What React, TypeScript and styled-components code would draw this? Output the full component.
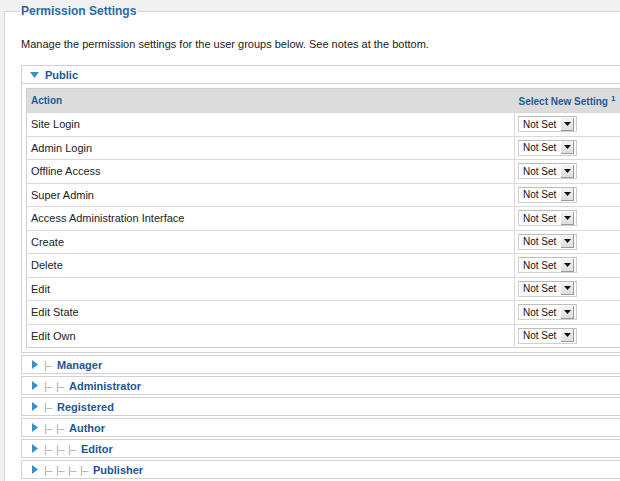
import styled, { createGlobalStyle } from "styled-components";

const GlobalStyle = createGlobalStyle`
  html, body {
    margin: 0;
    padding: 0;
    overflow: hidden;
  }
  body {
    background: #f1f1f1;
    font-family: "Liberation Sans", Arial, sans-serif;
    font-size: 11px;
    color: #222;
  }
`;

const Fieldset = styled.fieldset`
  margin: 4px 0 0 4px;
  padding: 0 0 20px 16px;
  width: 700px;
  border: 1px solid #d6d6d6;
  border-right: none;
  background: #fff;
`;

const Legend = styled.legend`
  padding: 0 1px;
  margin-left: -1px;
  font-size: 12px;
  font-weight: bold;
  line-height: 14px;
  color: #2c6aa3;
`;

const Intro = styled.p`
  margin: 19px 0 14px;
  line-height: 14px;
`;

const Panel = styled.div`
  border: 1px solid #d2d2d2;
  background: #fff;
  margin-bottom: 2px;
`;

const PanelHeader = styled.div<{ $open?: boolean }>`
  height: 17px;
  display: flex;
  align-items: center;
  padding-left: ${(p) => (p.$open ? 8 : 10)}px;
  font-weight: bold;
  font-size: 11px;
  color: #1f5690;
`;

const Arrow = styled.svg`
  flex: none;
  margin-right: 6px;
`;

const TreeStep = styled.span`
  display: inline-block;
  width: 12px;
  color: #a9a9a9;
  font-weight: normal;
  letter-spacing: -0.5px;

  &:last-of-type {
    width: 13px;
  }
`;

const PanelBody = styled.div`
  border-top: 1px solid #d2d2d2;
  padding: 4px;
`;

const Table = styled.table`
  border-collapse: collapse;
  table-layout: fixed;
  width: 100%;
  border: 1px solid #cfcfcf;
`;

const ActionCol = styled.col`
  width: 488px;
`;

const HeadCell = styled.th<{ $select?: boolean }>`
  background: #dcdcdc;
  height: 23px;
  padding: 0 0 0 4px;
  text-align: left;
  font-size: 10px;
  font-weight: bold;
  color: #215b94;
  white-space: nowrap;

  sup {
    font-size: 8px;
    margin-left: 3px;
    vertical-align: 4px;
  }
`;

const Row = styled.tr`
  height: 23.5px;
  border-top: 1px solid #dadada;
`;

const Cell = styled.td<{ $select?: boolean }>`
  padding: 0 0 0 ${(p) => (p.$select ? 3 : 4)}px;
  border-left: ${(p) => (p.$select ? "1px solid #dadada" : "none")};
  vertical-align: middle;
`;

const FakeSelect = styled.div`
  width: 57px;
  height: 14px;
  display: flex;
  align-items: center;
  border: 1px solid #cfcfcf;
  border-top-color: #bdbdbd;
  background: #fff;
  font-size: 10px;
  color: #111;
`;

const SelectText = styled.span`
  flex: 1;
  padding-left: 4px;
`;

const SelectButton = styled.span`
  width: 12px;
  height: 12px;
  margin-right: 2px;
  display: flex;
  align-items: center;
  justify-content: center;
  background: linear-gradient(#f4f4f4, #dedede);
  border-right: 1px solid #9a9a9a;
  border-bottom: 1px solid #9a9a9a;
`;

const actions = [
  "Site Login",
  "Admin Login",
  "Offline Access",
  "Super Admin",
  "Access Administration Interface",
  "Create",
  "Delete",
  "Edit",
  "Edit State",
  "Edit Own",
];

const groups = [
  { name: "Manager", depth: 1 },
  { name: "Administrator", depth: 2 },
  { name: "Registered", depth: 1 },
  { name: "Author", depth: 2 },
  { name: "Editor", depth: 3 },
  { name: "Publisher", depth: 4 },
];

function SettingSelect() {
  return (
    <FakeSelect>
      <SelectText>Not Set</SelectText>
      <SelectButton>
        <svg width="7" height="4" viewBox="0 0 7 4">
          <path d="M0 0h7L3.5 4z" fill="#111" />
        </svg>
      </SelectButton>
    </FakeSelect>
  );
}

function App() {
  return (
    <>
      <GlobalStyle />
      <Fieldset>
        <Legend>Permission Settings</Legend>
        <Intro>
          Manage the permission settings for the user groups below. See notes at the bottom.
        </Intro>

        <Panel>
          <PanelHeader $open>
            <Arrow width="9" height="6" viewBox="0 0 9 6">
              <path d="M0 0h9L4.5 6z" fill="#3b8fc9" />
            </Arrow>
            Public
          </PanelHeader>
          <PanelBody>
            <Table>
              <colgroup>
                <ActionCol />
                <col />
              </colgroup>
              <thead>
                <tr>
                  <HeadCell>Action</HeadCell>
                  <HeadCell $select>
                    Select New Setting<sup>1</sup>
                  </HeadCell>
                </tr>
              </thead>
              <tbody>
                {actions.map((a) => (
                  <Row key={a}>
                    <Cell>{a}</Cell>
                    <Cell $select>
                      <SettingSelect />
                    </Cell>
                  </Row>
                ))}
              </tbody>
            </Table>
          </PanelBody>
        </Panel>

        {groups.map((g) => (
          <Panel key={g.name}>
            <PanelHeader>
              <Arrow width="6" height="9" viewBox="0 0 6 9">
                <path d="M0 0v9l6-4.5z" fill="#3b8fc9" />
              </Arrow>
              {Array.from({ length: g.depth }, (_, i) => (
                <TreeStep key={i}>|–</TreeStep>
              ))}
              {g.name}
            </PanelHeader>
          </Panel>
        ))}
      </Fieldset>
    </>
  );
}

export default App;
